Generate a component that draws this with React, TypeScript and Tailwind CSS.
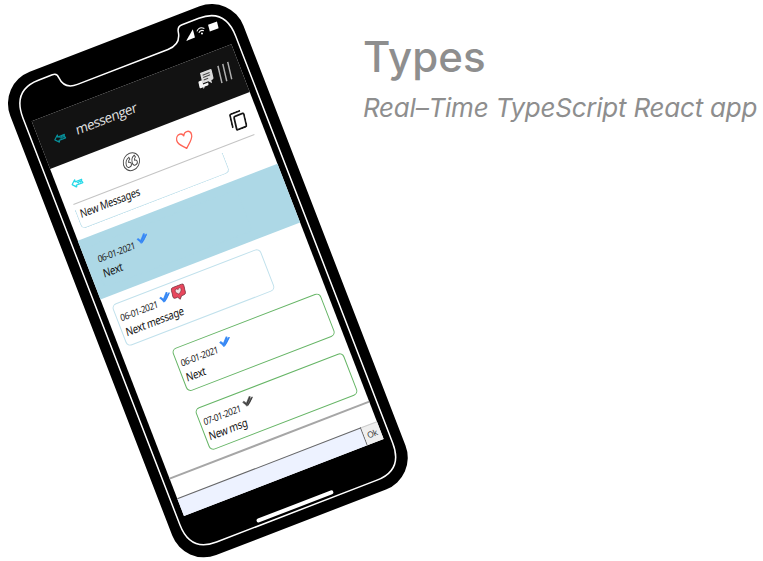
import type { ReactNode } from "react";

const hand = "font-['Noto_Sans','Open_Sans',sans-serif]";

function ArrowIcon({ className }: { className: string }) {
  return (
    <svg viewBox="0 0 26 18" className={className} fill="none" stroke="currentColor" strokeWidth="2.600" strokeLinejoin="round">
      <path d="M2 9 9 2v4h14l-1 3 2 4H10v4Z" />
      <path d="m12 7 3 4 2-4 2 4 3-4" strokeWidth="1.800" />
    </svg>
  );
}

function QuoteIcon() {
  return (
    <svg viewBox="0 0 36 36" className="h-[19px] w-[19px]" fill="none" stroke="#4a4a4a" strokeWidth="1.800">
      <circle cx="18" cy="18" r="16.200" />
      <path d="M15 8.500c-5 1.500-8 6-8 12 0 4 1.500 6 5 6s5-1.500 5-4.500-1.500-4.500-4.500-4.500c0-2.500 1-4 3.500-5Z" />
      <path d="M26 8.500c-5 1.500-7 6-7 12 0 4 1.500 6 5 6s5-1.500 5-4.500-1.500-4.500-4.500-4.500c0-2.500 1-4 3-5Z" />
    </svg>
  );
}

function HeartIcon() {
  return (
    <svg viewBox="0 0 36 36" className="h-[18px] w-[18px]" fill="none" stroke="#ff6557" strokeWidth="2.700" strokeLinejoin="round">
      <path d="M18 34C12 27 2 21 2 12 2 6 6 2.500 10.500 2.500c4 0 6.500 2.500 7.500 6 1-3.500 3.500-6 7.500-6C30 2.500 34 6 34 12c0 9-10 15-16 22Z" />
    </svg>
  );
}

function CopyIcon() {
  return (
    <svg viewBox="0 0 32 38" className="h-[19px] w-4" fill="none" stroke="#161616" strokeWidth="3.600" strokeLinejoin="round">
      <path d="M2 29V4.500Q2 2 4.500 2H24" />
      <rect x="9" y="9" width="21" height="27" rx="2.500" />
    </svg>
  );
}

function ChatIcon() {
  return (
    <svg viewBox="0 0 32 32" className="h-[17px] w-[17px]">
      <path d="M3 15h6v8h10v3q0 2-2 2h-6l-3 4v-4H3q-2 0-2-2v-9q0-2 2-2Z" fill="#f5f5f5" />
      <path d="M8 1h20q3 0 3 3v14q0 3-3 3h-2v6l-6-6H8Z" fill="#dcdcdc" />
      <path d="M12 6.500h14M12 11h14M12 15.500h9" stroke="#444" strokeWidth="1.900" />
    </svg>
  );
}

function MenuIcon() {
  return (
    <svg viewBox="0 0 14 18" className="h-[18px] w-[14px]" stroke="#b0b0b0" strokeWidth="1.500">
      <path d="M1.500 0v18M6.700 0v18M12 0v18" />
    </svg>
  );
}

function CheckIcon({ seen }: { seen: boolean }) {
  return (
    <svg viewBox="0 0 24 20" className="h-[10px] w-[12px]">
      <path d="M0 8 4 6l4 5 8-10 3 1-1 4 3-2 3 1-8 9-6 5H7L4 13Z" fill={seen ? "#4593f8" : "#6b6b6b"} />
      <path d="m3 9 5 6L18 3M10 17 22 6" stroke={seen ? "#2f7ff0" : "#2a2a2a"} strokeWidth="1.400" fill="none" />
    </svg>
  );
}

function LikeBadge() {
  return (
    <svg viewBox="0 0 28 30" className="h-[15.500px] w-[15px]">
      <path d="M5 1.500h18q4 0 4 4v13q0 4-4 4h-5L14 28l-4-5.500H5q-4 0-4-4v-13q0-4 4-4Z" fill="#e8475d" stroke="#6b2a35" strokeWidth="1.300" />
      <path d="M14 18c-3-3-6-4.500-6-8 0-4 5-4.500 6-1 1-3.500 6-3 6 1 0 3.500-3 5-6 8Z" fill="#f3dfe2" stroke="#6b2a35" strokeWidth="1" />
    </svg>
  );
}

type MessageProps = { date: string; text: string; seen?: boolean; liked?: boolean; border: string };

function Message({ date, text, seen = true, liked = false, border }: MessageProps) {
  return (
    <div className={`h-[45.500px] w-[159.500px] rounded-[5px] border pl-[3px] ${border}`}>
      <div className="flex h-[21.500px] items-end">
        <span className={`w-[42px] origin-left scale-x-[0.890] -skew-x-8 whitespace-nowrap text-[9.500px] leading-[13px] tracking-[-0.500px] text-[#222] ${hand}`}>
          {date}
        </span>
        <span className="ml-px mb-[5.500px] flex -skew-x-8">
          <CheckIcon seen={seen} />
        </span>
        {liked && (
          <span className="mb-[1.500px] ml-px flex -skew-x-8">
            <LikeBadge />
          </span>
        )}
      </div>
      <div className={`w-fit origin-left scale-x-[0.850] -skew-x-8 text-[11.500px] leading-[17px] tracking-[-0.350px] text-[#151515] ${hand}`}>{text}</div>
    </div>
  );
}

function Tool({ children, className }: { children: ReactNode; className: string }) {
  return <div className={`flex -skew-x-8 items-center justify-center ${className}`}>{children}</div>;
}

function PhoneOutline() {
  return (
    <svg viewBox="0 0 249.500 517.500" className="pointer-events-none absolute inset-0 h-full w-full" fill="none">
      <path
        d="M39 11h15q5 0 5 5 1 13 15 13h97q14 0 16-13 1-5 6-5h18q28 0 28 30v436q0 29-28 29H39q-28 0-28-29V41q0-30 28-30Z"
        stroke="white"
        strokeWidth="1.500"
      />
      <path d="M191 27.500h9.500l1-8.500Z" fill="white" />
      <path d="M204.500 22.500q4-4 8 0M205.800 24.500q2.700-2.600 5.400 0" stroke="white" strokeWidth="1" />
      <circle cx="208.500" cy="26.300" r="1" fill="white" />
      <path d="m217.300 20.400 9.500.1-.9 6.800h-9.400Z" fill="white" />
    </svg>
  );
}

function Phone() {
  return (
    <div className="relative -ml-[2px] mt-[84.300px] h-[517.500px] w-[249.500px] shrink-0 origin-top-left rotate-[-21.100deg] rounded-[34px] bg-black pl-[18px] pt-[47px]">
      <PhoneOutline />
      <div className="flex h-[423px] w-[214px] flex-col bg-white">
        <header className="flex h-[51px] shrink-0 items-center bg-[#121212] pl-[14px]">
          <ArrowIcon className="h-[9px] w-[13px] -skew-x-8 text-[#078f99]" />
          <span className="-mt-[3px] ml-[10.500px] w-[134px] -skew-x-8 font-['Open_Sans','Noto_Sans',sans-serif] text-[13.500px] tracking-[-0.500px] text-[#e4e4e4]">
            messenger
          </span>
          <div className="-ml-[3px] -mt-1 -skew-x-8">
            <ChatIcon />
          </div>
          <div className="-mt-1 ml-[5px] -skew-x-8">
            <MenuIcon />
          </div>
        </header>
        <nav className="mx-[9px] flex h-[41.800px] w-[194px] shrink-0 items-center border-b border-[#c4c4c4] pt-[4px]">
          <Tool className="w-[23px]">
            <ArrowIcon className="h-[9px] w-[13px] text-[#27d9e8]" />
          </Tool>
          <Tool className="ml-[37px] w-[19px]">
            <QuoteIcon />
          </Tool>
          <Tool className="ml-[38.500px] w-[18px]">
            <HeartIcon />
          </Tool>
          <Tool className="ml-[40.500px] w-[16px]">
            <CopyIcon />
          </Tool>
        </nav>
        <main className="flex h-[291px] shrink-0 flex-col border-b-2 border-[#a6a6a6] pt-[5px]">
          <div className="ml-[7.500px] h-[21px] w-[159.500px] shrink-0 rounded-b-[5px] border border-t-0 border-[#c1e1ec] pl-[3px]">
            <div className={`w-fit origin-left scale-x-[0.830] -skew-x-8 text-[11.500px] leading-[12px] tracking-[-0.350px] text-[#151515] ${hand}`}>
              New Messages
            </div>
          </div>
          <section className="mt-[8.800px] h-[63px] shrink-0 bg-[#add8e6] pl-[7.500px] pt-[9px]">
            <Message date="06-01-2021" text="Next" border="border-[#add8e6]" />
          </section>
          <section className="pl-[7.500px] pt-[9.300px]">
            <Message date="06-01-2021" text="Next message" liked border="border-[#c1e1ec]" />
          </section>
          <section className="flex flex-col gap-[18px] pl-[47.500px] pt-[18px]">
            <Message date="06-01-2021" text="Next" border="border-[#66b566]" />
            <Message date="07-01-2021" text="New msg" seen={false} border="border-[#66b566]" />
          </section>
        </main>
        <footer className="mt-[20px] flex flex-1">
          <div className="w-[196.500px] border-r-[1.500px] border-t-[1.500px] border-[#666] bg-[#edf2ff]" />
          <button className="flex-1 border-t border-[#ccc] bg-[#efefef] font-['Open_Sans',sans-serif] text-[8.500px] leading-none tracking-[-0.300px] text-[#333]">
            Ok
          </button>
        </footer>
      </div>
      <div className="ml-[66px] mt-[29px] h-[3.500px] w-[82px] rounded-full bg-white" />
    </div>
  );
}

export default function App() {
  return (
    <div className="flex h-[561px] w-[763px] items-start overflow-hidden bg-white">
      <Phone />
      <div className="ml-[115.500px] pt-[32px] font-['Inter','Open_Sans',sans-serif] text-[#8e8e8e]">
        <h1 className="whitespace-nowrap text-[42px] font-medium leading-[50px] tracking-[0.100px]">Types</h1>
        <p className="mt-[10px] whitespace-nowrap text-[26px] italic leading-[32px] tracking-[-0.230px]">Real–Time TypeScript React app</p>
      </div>
    </div>
  );
}
